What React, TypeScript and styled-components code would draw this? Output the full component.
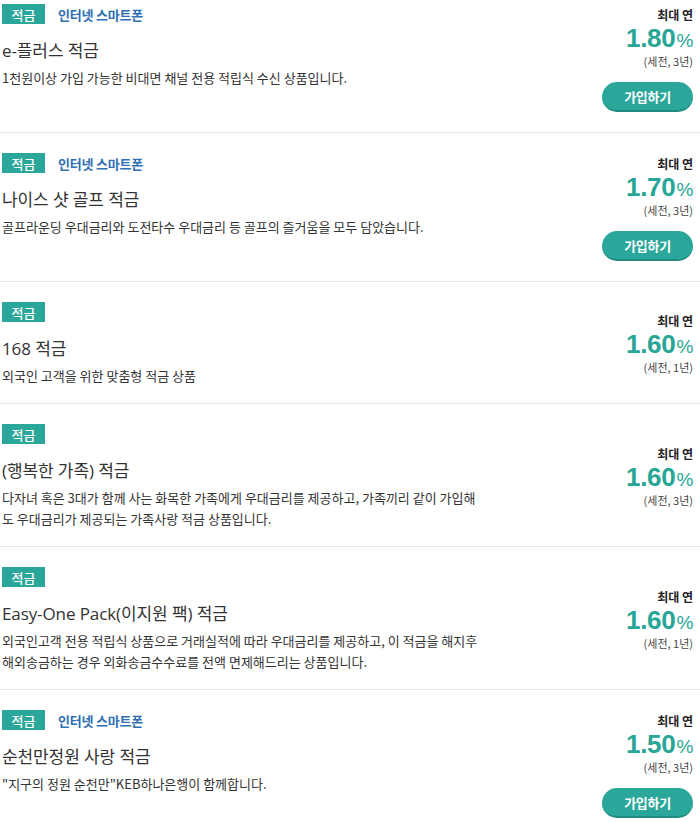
import React from 'react';
import styled, { createGlobalStyle } from 'styled-components';

interface Product {
  name: string;
  desc: string[];
  channel?: string;
  rate: string;
  term: string;
  canJoin?: boolean;
}

const products: Product[] = [
  {
    name: 'e-플러스 적금',
    desc: ['1천원이상 가입 가능한 비대면 채널 전용 적립식 수신 상품입니다.'],
    channel: '인터넷 스마트폰',
    rate: '1.80',
    term: '(세전, 3년)',
    canJoin: true,
  },
  {
    name: '나이스 샷 골프 적금',
    desc: ['골프라운딩 우대금리와 도전타수 우대금리 등 골프의 즐거움을 모두 담았습니다.'],
    channel: '인터넷 스마트폰',
    rate: '1.70',
    term: '(세전, 3년)',
    canJoin: true,
  },
  {
    name: '168 적금',
    desc: ['외국인 고객을 위한 맞춤형 적금 상품'],
    rate: '1.60',
    term: '(세전, 1년)',
  },
  {
    name: '(행복한 가족) 적금',
    desc: [
      '다자녀 혹은 3대가 함께 사는 화목한 가족에게 우대금리를 제공하고, 가족끼리 같이 가입해',
      '도 우대금리가 제공되는 가족사랑 적금 상품입니다.',
    ],
    rate: '1.60',
    term: '(세전, 3년)',
  },
  {
    name: 'Easy-One Pack(이지원 팩) 적금',
    desc: [
      '외국인고객 전용 적립식 상품으로 거래실적에 따라 우대금리를 제공하고, 이 적금을 해지후',
      '해외송금하는 경우 외화송금수수료를 전액 면제해드리는 상품입니다.',
    ],
    rate: '1.60',
    term: '(세전, 1년)',
  },
  {
    name: '순천만정원 사랑 적금',
    desc: ['"지구의 정원 순천만"KEB하나은행이 함께합니다.'],
    channel: '인터넷 스마트폰',
    rate: '1.50',
    term: '(세전, 3년)',
    canJoin: true,
  },
];

const GlobalStyle = createGlobalStyle`
  body {
    margin: 0;
    background: #fff;
    font-family: 'Noto Sans CJK KR', 'Noto Sans', sans-serif;
    color: #333;
  }
`;

const List = styled.ul`
  list-style: none;
  margin: -16px 0 0;
  padding: 0;
`;

const Row = styled.li`
  display: flex;
  align-items: center;
  justify-content: space-between;
  border-bottom: 1px solid #e6e6e6;
  padding: 0 7px 0 2px;
`;

const Info = styled.div`
  align-self: flex-start;
  padding: 20px 0 17px;
  width: 500px;
`;

const Tags = styled.div`
  display: flex;
  align-items: center;
  height: 20px;
  margin-bottom: 14px;
`;

const Badge = styled.span`
  display: flex;
  align-items: center;
  justify-content: center;
  width: 43px;
  height: 20px;
  background: #2aa79a;
  color: #fff;
  font-size: 13px;
  font-weight: 500;
`;

const Channel = styled.span`
  margin-left: 13px;
  color: #2f6fb3;
  font-size: 13px;
  font-weight: 700;
  letter-spacing: -0.2px;
`;

const Title = styled.h3`
  margin: 0 0 3px;
  font-family: 'Open Sans', 'Noto Sans CJK KR', sans-serif;
  font-size: 17px;
  line-height: 26px;
  font-weight: 400;
  color: #333;
  letter-spacing: -0.1px;
`;

const Desc = styled.p`
  margin: 0;
  font-size: 13px;
  line-height: 21px;
  color: #333;
  white-space: nowrap;
`;

const RateBox = styled.div`
  display: flex;
  flex-direction: column;
  align-items: flex-end;
  padding: 23px 0 20px;
`;

const RateLabel = styled.span`
  font-size: 12px;
  line-height: 16px;
  font-weight: 700;
  color: #222;
`;

const Rate = styled.span`
  font-family: 'Liberation Sans', Arial, sans-serif;
  font-size: 26px;
  line-height: 30px;
  font-weight: 700;
  color: #27a596;
  letter-spacing: -0.3px;
`;

const Percent = styled.span`
  font-size: 19px;
  line-height: 1;
  font-weight: 400;
  margin-left: 1px;
`;

const Term = styled.span`
  font-size: 11px;
  line-height: 16px;
  color: #444;
`;

const JoinButton = styled.button`
  margin-top: 13px;
  width: 91px;
  height: 30px;
  border: none;
  border-bottom: 2px solid #1f8c7f;
  border-radius: 15px;
  background: #2aa79a;
  color: #fff;
  font-family: 'Noto Sans CJK KR', sans-serif;
  font-size: 13px;
  font-weight: 700;
  letter-spacing: -0.3px;
  cursor: pointer;
`;

const App: React.FC = () => (
  <>
    <GlobalStyle />
    <List>
      {products.map((p) => (
        <Row key={p.name}>
          <Info>
            <Tags>
              <Badge>적금</Badge>
              {p.channel && <Channel>{p.channel}</Channel>}
            </Tags>
            <Title>{p.name}</Title>
            {p.desc.map((line) => (
              <Desc key={line}>{line}</Desc>
            ))}
          </Info>
          <RateBox>
            <RateLabel>최대 연</RateLabel>
            <Rate>
              {p.rate}
              <Percent>%</Percent>
            </Rate>
            <Term>{p.term}</Term>
            {p.canJoin && <JoinButton type="button">가입하기</JoinButton>}
          </RateBox>
        </Row>
      ))}
    </List>
  </>
);

export default App;
